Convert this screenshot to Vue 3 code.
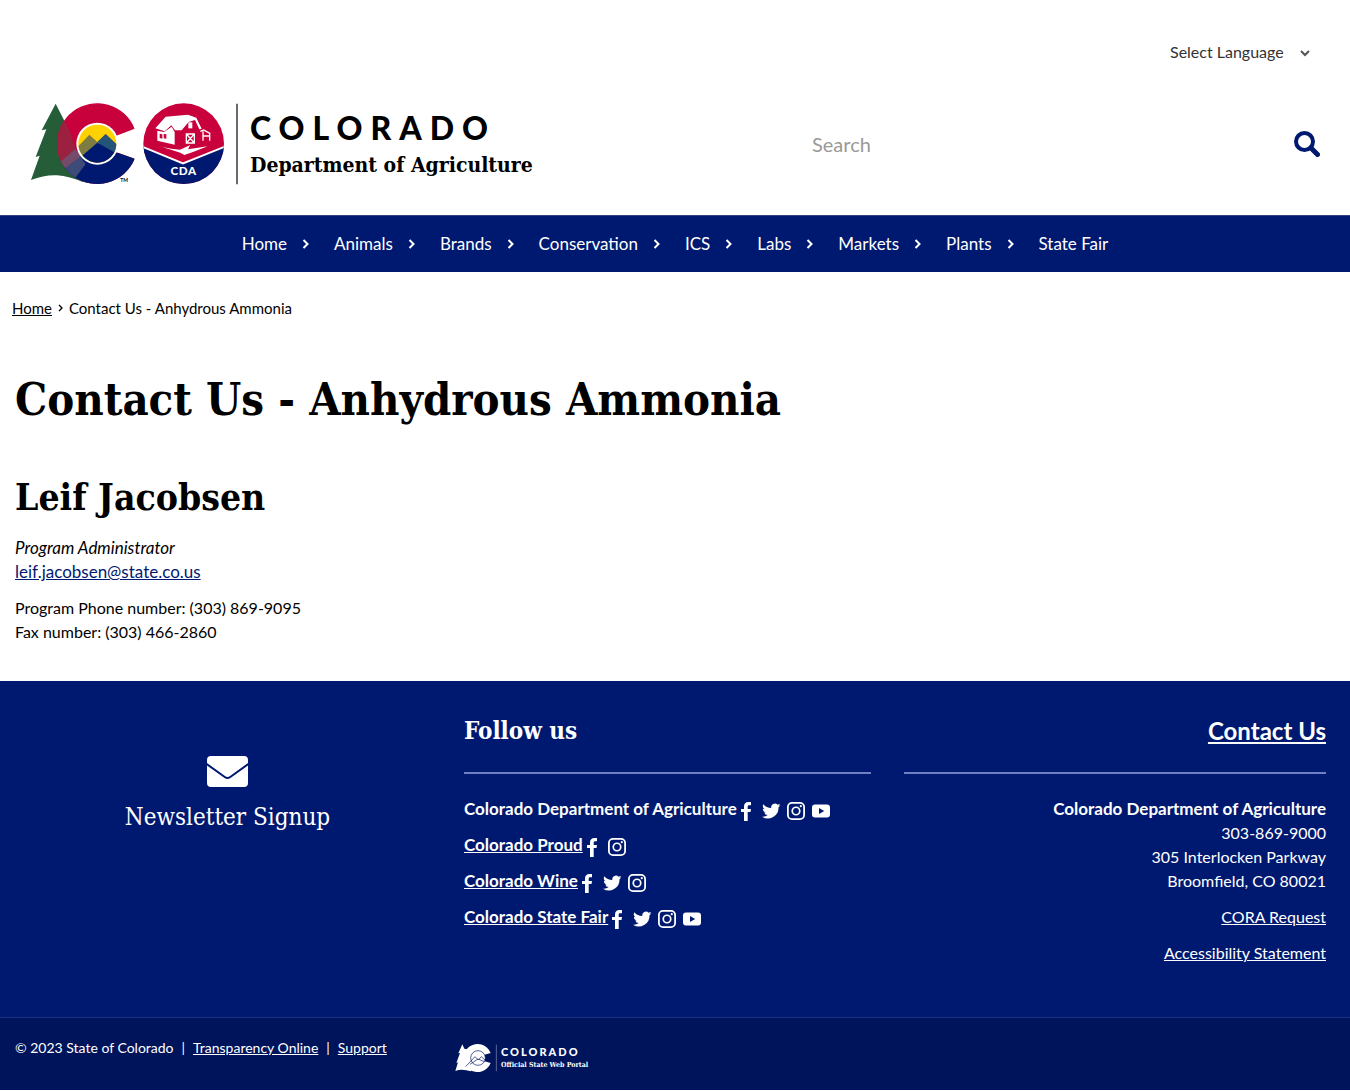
<script setup>
const navItems = ['Home', 'Animals', 'Brands', 'Conservation', 'ICS', 'Labs', 'Markets', 'Plants', 'State Fair']

const icons = {
  Facebook: 'M8 20V11H5V8h3V5.500C8 2.500 9.800 1 12.300 1H15v3.200h-1.800C12 4.200 11.700 4.800 11.700 5.700V8H15l-.500 3h-2.800v9z',
  Twitter: 'M19.500 4.200a7.500 7.500 0 0 1-2.100.6 3.700 3.700 0 0 0 1.600-2 7.500 7.500 0 0 1-2.400.9 3.800 3.800 0 0 0-6.400 3.400A10.700 10.700 0 0 1 2.400 3.200a3.800 3.800 0 0 0 1.200 5 3.700 3.700 0 0 1-1.700-.5 3.800 3.800 0 0 0 3 3.700 3.800 3.800 0 0 1-1.700.1 3.800 3.800 0 0 0 3.500 2.600A7.600 7.600 0 0 1 1 15.700 10.700 10.700 0 0 0 17.500 6.200a7.600 7.600 0 0 0 2-2z',
  Instagram: 'M6 1h8a5 5 0 0 1 5 5v8a5 5 0 0 1-5 5H6a5 5 0 0 1-5-5V6a5 5 0 0 1 5-5zm0 1.800A3.200 3.200 0 0 0 2.800 6v8A3.200 3.200 0 0 0 6 17.200h8a3.200 3.200 0 0 0 3.200-3.200V6A3.200 3.200 0 0 0 14 2.800zM10 5.400a4.600 4.600 0 1 1 0 9.200 4.600 4.600 0 0 1 0-9.200zm0 1.700a2.900 2.900 0 1 0 0 5.800 2.900 2.900 0 0 0 0-5.800zM14.800 4.100a1.100 1.100 0 1 1 0 2.200 1.100 1.100 0 0 1 0-2.200z',
  YouTube: 'M4 3.500h12a3 3 0 0 1 3 3v7a3 3 0 0 1-3 3H4a3 3 0 0 1-3-3v-7a3 3 0 0 1 3-3zM8 7v6l5.200-3z',
}

const accounts = [
  { name: 'Colorado Department of Agriculture', linked: false, networks: ['Facebook', 'Twitter', 'Instagram', 'YouTube'] },
  { name: 'Colorado Proud', linked: true, networks: ['Facebook', 'Instagram'] },
  { name: 'Colorado Wine', linked: true, networks: ['Facebook', 'Twitter', 'Instagram'] },
  { name: 'Colorado State Fair', linked: true, networks: ['Facebook', 'Twitter', 'Instagram', 'YouTube'] },
]
</script>

<template>
  <div class="page">
    <header class="header">
      <div class="language">
        <select aria-label="Select Language">
          <option>Select Language</option>
        </select>
        <svg class="caret" width="12" height="8" viewBox="0 0 12 8" aria-hidden="true">
          <path d="M2 2l4 4 4-4" fill="none" stroke="#555" stroke-width="2" />
        </svg>
      </div>
      <div class="brand-row">
        <a class="brand" href="#">
          <svg class="brand-mark" width="208" height="82" viewBox="31 25 624 246" role="img" aria-label="Colorado and CDA logos">
            <defs>
              <clipPath id="c-shape">
                <path d="M345 102A121 121 0 1 0 345 192L288 172V124Z" />
              </clipPath>
              <clipPath id="inner-disc"><circle cx="233" cy="147" r="57" /></clipPath>
              <clipPath id="cda-disc"><circle cx="492" cy="147" r="121" /></clipPath>
            </defs>
            <path d="M108 27L66 107 80 104 48 187 60 183 34 256Q75 240 112 242 150 245 190 262L200 200 150 110Z" fill="#245d38" />
            <g clip-path="url(#c-shape)">
              <rect x="100" y="20" width="260" height="260" fill="#c8003c" />
              <path d="M126 222L182 178 233 190 350 160V275H180Z" fill="#001970" />
              <path d="M108 27L150 110 175 180 126 222 108 200Z" fill="#9c2040" />
              <path d="M128 222L178 180 198 208 165 252 140 240Z" fill="#3e4a78" />
              <path d="M118 205L166 164 184 184 132 224Z" fill="#754a6b" />
            </g>
            <circle cx="233" cy="147" r="63" fill="#fff" />
            <g clip-path="url(#inner-disc)">
              <rect x="170" y="84" width="126" height="126" fill="#ffd100" />
              <path d="M165 166L209 120 233 142 258 118 300 158V210H165Z" fill="#7e7c41" />
              <path d="M233 142L258 118 300 158V180L250 158Z" fill="#245579" />
              <path d="M172 196L233 144 300 182V210H172Z" fill="#001970" />
            </g>
            <g clip-path="url(#cda-disc)">
              <rect x="370" y="25" width="244" height="244" fill="#c8003c" />
              <path d="M365 153L490 206 618 153V275H365Z" fill="#001970" />
              <path d="M365 155L490 206 618 155" fill="none" stroke="#fff" stroke-width="6" />
            </g>
            <path d="M407 101L438 66 505 60 530 69 546 102 539 104 526 76 507 82 486 107 466 107 455 92 435 110Z" fill="#fff" />
            <path d="M413 108L433 112 456 96 465 112V150L413 138Z" fill="#fff" />
            <path d="M420 117l8 2v13l-8-2zM432 118l8 1v13l-8-1z" fill="#c8003c" />
            <path d="M506 83h12v18h-12z" fill="#fff" />
            <path d="M550 110v28M550 124h20M570 117v21M542 110l10-4 20 11" fill="none" stroke="#fff" stroke-width="4" />
            <path d="M500 118h24v27h-24zM500 118l24 27M524 118l-24 27" fill="none" stroke="#fff" stroke-width="4" />
            <path d="M428 157Q455 163 481 165L512 151 505 164 564 155 520 172 494 181 482 174Z" fill="#fff" />
            <text x="492" y="242" text-anchor="middle" class="seal-text">CDA</text>
            <text x="302" y="263" class="tm-text">TM</text>
            <path d="M652 27V269" stroke="#222" stroke-width="4" />
          </svg>
          <span class="brand-text">
            <span class="brand-state">COLORADO</span>
            <span class="brand-dept">Department of Agriculture</span>
          </span>
        </a>
        <form class="search" role="search" @submit.prevent>
          <input type="text" placeholder="Search" aria-label="Search" />
          <button type="submit" aria-label="Search">
            <svg width="26" height="26" viewBox="0 0 26 26" aria-hidden="true">
              <circle cx="10.500" cy="10.500" r="8.500" fill="none" stroke="#001970" stroke-width="4" />
              <path d="M17 17l6.500 6.500" stroke="#001970" stroke-width="5" stroke-linecap="round" />
            </svg>
          </button>
        </form>
      </div>
    </header>

    <nav class="nav" aria-label="Main">
      <a v-for="(item, i) in navItems" :key="item" href="#">
        {{ item }}
        <svg v-if="i < navItems.length - 1" width="7" height="10" viewBox="0 0 7 10" aria-hidden="true"><path d="M1.500 1L5.500 5l-4 4" fill="none" stroke="#fff" stroke-width="2" /></svg>
      </a>
    </nav>

    <main class="main">
      <nav class="breadcrumb" aria-label="Breadcrumb">
        <a href="#">Home</a>
        <svg width="5" height="8" viewBox="0 0 5 8" aria-hidden="true"><path d="M1 1l3 3-3 3" fill="none" stroke="#000" stroke-width="1.300" /></svg>
        <span>Contact Us - Anhydrous Ammonia</span>
      </nav>
      <h1>Contact Us - Anhydrous Ammonia</h1>
      <h2>Leif Jacobsen</h2>
      <p class="role"><em>Program Administrator</em><br /><a href="#">leif.jacobsen@state.co.us</a></p>
      <p>Program Phone number: (303) 869-9095<br />Fax number: (303) 466-2860</p>
    </main>

    <footer class="footer">
      <div class="footer-columns">
        <section class="newsletter">
          <a href="#">
            <svg width="41" height="31" viewBox="0 0 41 31" aria-hidden="true">
              <path d="M4 0H37A4 4 0 0 1 41 4V7L23 20Q20.500 22 18 20L0 7V4A4 4 0 0 1 4 0Z" fill="#fff" />
              <path d="M0 9.500L17.500 22Q20.500 24.200 23.500 22L41 9.500V27A4 4 0 0 1 37 31H4A4 4 0 0 1 0 27Z" fill="#fff" />
            </svg>
            <span>Newsletter Signup</span>
          </a>
        </section>
        <section class="follow">
          <h3>Follow us</h3>
          <ul>
            <li v-for="account in accounts" :key="account.name">
              <a v-if="account.linked" href="#" class="account">{{ account.name }}</a>
              <span v-else class="account">{{ account.name }}</span>
              <a v-for="network in account.networks" :key="network" href="#" :aria-label="network" class="social" :class="{ narrow: network === 'Facebook' }">
                <svg width="20" height="20" viewBox="0 0 20 20" aria-hidden="true"><path :d="icons[network]" fill="#fff" fill-rule="evenodd" /></svg>
              </a>
            </li>
          </ul>
        </section>
        <section class="contact">
          <h3><a href="#">Contact Us</a></h3>
          <address>
            <strong class="account">Colorado Department of Agriculture</strong><br />303-869-9000<br />305 Interlocken Parkway<br />Broomfield, CO 80021
          </address>
          <p><a href="#">CORA Request</a></p>
          <p><a href="#">Accessibility Statement</a></p>
        </section>
      </div>
      <div class="legal">
        <div class="legal-links">
          <span>© 2023 State of Colorado</span><span>|</span><a href="#">Transparency Online</a><span>|</span><a href="#">Support</a>
        </div>
        <a class="portal" href="#">
          <svg width="42" height="28" viewBox="0 0 126 84" role="img" aria-label="Colorado">
            <path d="M22 1L10 28 15 27 4 57 9 55 1 81Q20 73 48 82L60 20 28 14Z" fill="#fff" />
            <path d="M107 27A42 42 0 1 0 107 57L86 51V33Z" fill="#fff" />
            <circle cx="69" cy="42" r="22" fill="#fff" stroke="#00145c" stroke-width="2" />
            <path d="M32 68L60 38 70 48 79 38 90 48M45 61L69 45 88 53" fill="none" stroke="#00145c" stroke-width="2" />
            <path d="M124 2V82" stroke="#8791bb" stroke-width="2" />
          </svg>
          <span class="portal-text">
            <span class="portal-state">COLORADO</span>
            <span class="portal-name">Official State Web Portal</span>
          </span>
        </a>
      </div>
    </footer>
  </div>
</template>

<style>
body {
  background: #fff;
}
</style>

<style scoped>
.page {
  color: #000;
  font: 16px/24px Lato, sans-serif;
}

a {
  color: inherit;
}

h1, h2, h3, p, ul {
  margin: 0;
  padding: 0;
}

h1, h2, h3, .brand-dept, .newsletter, .portal-name {
  font-family: "DejaVu Serif Condensed", "DejaVu Serif", serif;
}

.header {
  padding: 40px 30px 30px;
}

.language {
  position: relative;
  width: 150px;
  margin: 0 0 39px auto;
}

.language select {
  appearance: none;
  width: 100%;
  border: 0;
  padding: 0;
  background: none;
  color: #333;
  font: inherit;
}

.caret {
  position: absolute;
  top: 9px;
  right: 9px;
  pointer-events: none;
}

.brand-row {
  display: flex;
  align-items: center;
  justify-content: space-between;
}

.brand {
  display: flex;
  gap: 12px;
  text-decoration: none;
}

.brand-text {
  display: flex;
  flex-direction: column;
  padding-top: 8px;
}

.brand-state {
  font: 900 32px/34px Lato, sans-serif;
  letter-spacing: 8px;
}

.brand-dept {
  font-size: 21px;
  font-weight: bold;
  line-height: 40px;
}

.seal-text {
  fill: #fff;
  font: 900 35px Lato, sans-serif;
  letter-spacing: 2px;
}

.tm-text {
  font: 700 15px Lato, sans-serif;
}

.search {
  display: flex;
  align-items: center;
  width: 508px;
}

.search input {
  flex: 1;
  min-width: 0;
  border: 0;
  padding: 0;
  background: none;
  font: 20px/28px Lato, sans-serif;
}

.search input::placeholder {
  color: #999;
}

.search button {
  border: 0;
  padding: 0;
  background: none;
  line-height: 0;
}

.nav {
  display: flex;
  justify-content: center;
  gap: 25px;
  padding: 16px 0;
  border-top: 1px solid #34427c;
  background: #001970;
  color: #fff;
  font-size: 17px;
}

.nav a {
  display: flex;
  align-items: center;
  gap: 15px;
  text-decoration: none;
}

.main {
  padding: 24px 15px 37px;
}

.breadcrumb {
  display: flex;
  align-items: center;
  gap: 6px;
  margin: 0 0 53px -3px;
  font-size: 15px;
}

h1 {
  margin-bottom: 48px;
  font-size: 45px;
  line-height: 54px;
}

h2 {
  margin-bottom: 17px;
  font-size: 37px;
  line-height: 44px;
}

.role {
  font-size: 17px;
}

.main p + p {
  margin-top: 12px;
}

.main p a {
  color: #001970;
}

.footer {
  background: #001970;
  color: #fff;
}

.footer-columns {
  display: grid;
  grid-template-columns: repeat(3, 1fr);
  padding: 36px 0 52px;
}

.newsletter {
  padding: 39px 10px 0 15px;
  text-align: center;
}

.newsletter a {
  display: inline-flex;
  flex-direction: column;
  align-items: center;
  gap: 15px;
  font-size: 24px;
  line-height: 30px;
  text-decoration: none;
}

h3 {
  margin-bottom: 23px;
  padding-bottom: 27px;
  border-bottom: 2px solid #6f7fc4;
  font-size: 24px;
  line-height: 28px;
}

.follow {
  padding: 0 29px 0 14px;
}

.follow ul {
  list-style: none;
}

.follow li {
  display: flex;
  align-items: center;
  gap: 5px;
  margin-bottom: 12px;
}

.account {
  font-size: 17px;
  font-weight: bold;
}

.social {
  height: 20px;
  padding-top: 4px;
}

.social svg {
  display: block;
}

.social.narrow svg {
  margin-left: -6px;
}

.contact {
  padding: 0 24px 0 4px;
  text-align: right;
}

.contact h3 {
  font: bold 24px/28px Lato, sans-serif;
}

.contact address {
  font-style: normal;
}

.contact p {
  margin-top: 12px;
}

.legal {
  display: grid;
  grid-template-columns: 1fr 2fr;
  padding: 18px 0;
  border-top: 1px solid #1b2f7d;
  background: #00145c;
}

.legal-links {
  display: flex;
  gap: 8px;
  padding-left: 15px;
  font-size: 14px;
}

.portal {
  display: flex;
  gap: 4px;
  padding: 8px 0 0 5px;
  text-decoration: none;
}

.portal-text {
  display: flex;
  flex-direction: column;
}

.portal-state {
  font: 900 11px/16px Lato, sans-serif;
  letter-spacing: 2px;
}

.portal-name {
  font-size: 7px;
  font-weight: bold;
  line-height: 10px;
}
</style>
